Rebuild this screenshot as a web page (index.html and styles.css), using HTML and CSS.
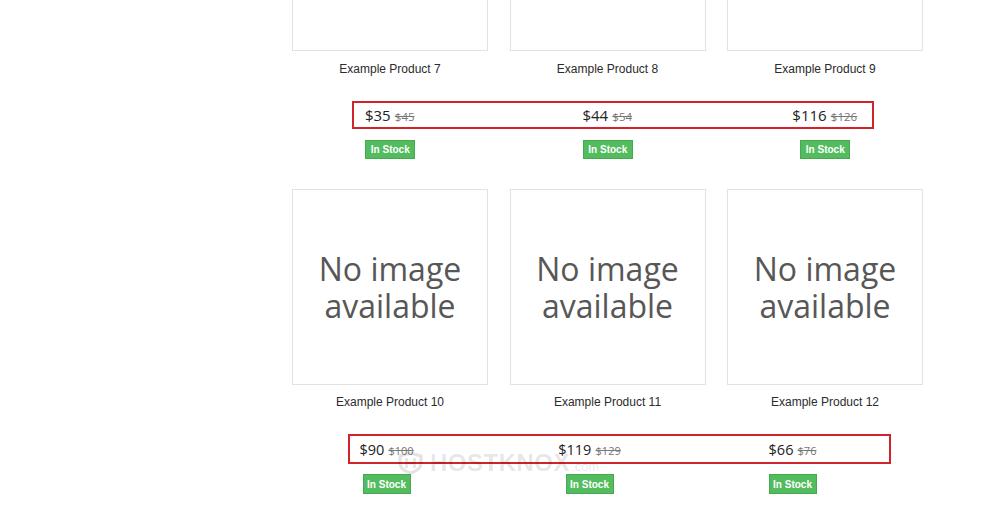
FILE: index.html
```html
<!DOCTYPE html>
<html lang="en">
<head>
<meta charset="utf-8">
<title>Products</title>
<link rel="stylesheet" href="styles.css">
</head>
<body>
<div class="page">
  <aside class="sidebar"></aside>
  <main class="content">
    <section class="product-row product-row--first">
      <div class="cards">
        <div class="card"><div class="thumb"></div><div class="title">Example Product 7</div></div>
        <div class="card"><div class="thumb"></div><div class="title">Example Product 8</div></div>
        <div class="card"><div class="thumb"></div><div class="title">Example Product 9</div></div>
      </div>
      <div class="prices prices--a">
        <div class="price"><span class="now">$35</span> <span class="old">$45</span></div>
        <div class="price"><span class="now">$44</span> <span class="old">$54</span></div>
        <div class="price"><span class="now">$116</span> <span class="old">$126</span></div>
        <div class="highlight highlight--a"></div>
      </div>
      <div class="stock stock--a">
        <div class="cell"><span class="badge">In Stock</span></div>
        <div class="cell"><span class="badge">In Stock</span></div>
        <div class="cell"><span class="badge">In Stock</span></div>
      </div>
    </section>

    <section class="product-row product-row--second">
      <div class="cards">
        <div class="card"><div class="thumb"><span class="noimg">No image<br>available</span></div><div class="title">Example Product 10</div></div>
        <div class="card"><div class="thumb"><span class="noimg">No image<br>available</span></div><div class="title">Example Product 11</div></div>
        <div class="card"><div class="thumb"><span class="noimg">No image<br>available</span></div><div class="title">Example Product 12</div></div>
      </div>
      <div class="prices prices--b">
        <div class="price"><span class="now">$90</span> <span class="old">$100</span></div>
        <div class="price"><span class="now">$119</span> <span class="old">$129</span></div>
        <div class="price"><span class="now">$66</span> <span class="old">$76</span></div>
        <div class="highlight highlight--b"></div>
      </div>
      <div class="stock stock--b">
        <div class="cell"><span class="badge">In Stock</span></div>
        <div class="cell"><span class="badge">In Stock</span></div>
        <div class="cell"><span class="badge">In Stock</span></div>
      </div>
      <div class="watermark">
        <svg class="shield" width="25" height="22" viewBox="0 0 25 22" aria-hidden="true">
          <path d="M12.5 1 L23 4 V11 C23 16 18 19.5 12.5 21 C7 19.5 2 16 2 11 V4 Z" fill="none" stroke="currentColor" stroke-width="3"/>
          <path d="M8.5 6 V16 M16.5 6 V16 M8.5 11 H16.5" fill="none" stroke="currentColor" stroke-width="2.6"/>
        </svg>
        <span class="wm-name">HOSTKNOX</span><span class="wm-tld">.com</span>
      </div>
    </section>
  </main>
</div>
</body>
</html>
```

FILE: styles.css
```css
* { box-sizing: border-box; }

html, body {
  margin: 0;
  padding: 0;
  background: #ffffff;
  overflow: hidden;
}

body {
  width: 996px;
  height: 506px;
  font-family: "Liberation Sans", Arial, sans-serif;
  color: #333333;
}

.page {
  display: flex;
}

.sidebar {
  width: 292px;
  flex: none;
}

.content {
  width: 640px;
  margin-top: -145px;
}

.product-row {
  position: relative;
}

.product-row--second {
  margin-top: 30px;
}

.cards {
  display: grid;
  grid-template-columns: repeat(3, 196px);
  column-gap: 21.5px;
}

.card {
  display: flex;
  flex-direction: column;
  align-items: center;
}

.thumb {
  width: 196px;
  height: 196px;
  border: 1px solid #e2e2e2;
  background: #ffffff;
  display: flex;
  align-items: center;
  justify-content: center;
}

.noimg {
  font-family: "Open Sans", "Noto Sans", sans-serif;
  font-size: 32px;
  line-height: 37px;
  color: #575757;
  text-align: center;
  margin-top: -1px;
}

.title {
  margin-top: 10px;
  font-size: 12px;
  line-height: 16px;
  color: #2b2b2b;
  text-align: center;
}

.product-row--second .title {
  margin-top: 9px;
}

.prices {
  position: relative;
  display: grid;
  font-family: "Open Sans", "Noto Sans", sans-serif;
}

.prices--a {
  grid-template-columns: repeat(3, 217.5px);
  height: 28px;
  line-height: 28px;
  margin-top: 24px;
  margin-left: -11px;
}

.prices--b {
  grid-template-columns: repeat(3, 203px);
  height: 30px;
  line-height: 30px;
  margin-top: 24px;
  margin-left: -7px;
}

.price {
  text-align: center;
  white-space: nowrap;
}

.now {
  font-size: 15px;
  color: #222222;
}

.old {
  font-size: 11.5px;
  color: #777777;
  text-decoration: line-through;
}

.prices--b .now {
  font-size: 14.5px;
}

.prices--b .old {
  font-size: 11px;
}

.highlight {
  position: absolute;
  top: 0;
  height: 100%;
  border: 2px solid #d1242a;
  pointer-events: none;
}

.highlight--a {
  left: 71px;
  width: 522px;
}

.highlight--b {
  left: 63px;
  width: 543px;
}

.stock {
  display: grid;
}

.stock--a {
  grid-template-columns: repeat(3, 217.5px);
  margin-top: 11px;
  margin-left: -10.5px;
}

.stock--b {
  grid-template-columns: repeat(3, 203px);
  margin-top: 10px;
  margin-left: -7px;
}

.cell {
  text-align: center;
  height: 19px;
}

.badge {
  display: inline-block;
  width: 50px;
  height: 19px;
  line-height: 18px;
  background: #52bc5e;
  border: 1px solid #47a852;
  color: #ffffff;
  font-family: "Liberation Sans", Arial, sans-serif;
  font-weight: bold;
  font-size: 10px;
  text-align: center;
  vertical-align: top;
}

.stock--b .badge {
  width: 48px;
  height: 20px;
  line-height: 19px;
}

.watermark {
  position: absolute;
  left: 106px;
  top: 263px;
  display: flex;
  align-items: flex-end;
  color: rgba(0, 0, 0, 0.11);
  pointer-events: none;
  white-space: nowrap;
}

.shield {
  margin-right: 7px;
}

.wm-name {
  font-family: "Liberation Sans", Arial, sans-serif;
  font-weight: bold;
  font-size: 24px;
  line-height: 22px;
  letter-spacing: 0.5px;
}

.wm-tld {
  font-family: "Liberation Sans", Arial, sans-serif;
  font-size: 13px;
  line-height: 14px;
  margin-left: 1px;
}
```
